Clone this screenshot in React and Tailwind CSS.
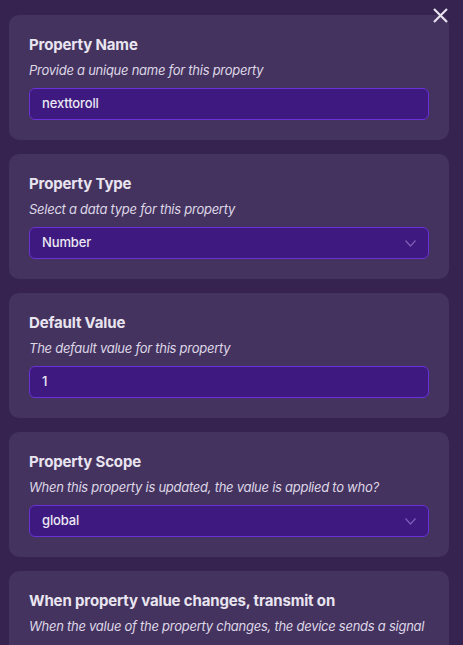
import React from "react";

function Chevron() {
  return (
    <svg width="11" height="7" viewBox="0 0 11 7" fill="none" className="shrink-0">
      <path d="M0.5 0.5 L5.5 6 L10.5 0.5" stroke="#7d5fb8" strokeWidth="1.2" />
    </svg>
  );
}

function Field({ value, select }) {
  return (
    <div className="mt-[9px] flex h-[32px] items-center justify-between rounded-[6px] border border-[#6a31d6] bg-[#3e1a80] pl-3 pr-[12px]">
      <span className="text-[13px] font-medium tracking-[-0.01em] text-[#ece8f4]">{value}</span>
      {select && <Chevron />}
    </div>
  );
}

function Card({ title, subtitle, value, select }) {
  return (
    <div className="shrink-0 rounded-[10px] bg-[#45335f] px-5 pt-[18px] pb-5">
      <div className="text-[15px] font-bold leading-6 tracking-[-0.01em] text-[#e9e5f0]">{title}</div>
      <div className="mt-1 whitespace-nowrap text-[13px] italic leading-[18px] tracking-[-0.02em] text-[#ddd7e6]">{subtitle}</div>
      {value !== undefined && <Field value={value} select={select} />}
    </div>
  );
}

export default function App() {
  return (
    <div
      className="relative h-[645px] w-[463px] overflow-hidden bg-[#36234f]"
      style={{ fontFamily: "Inter, 'Noto Sans', sans-serif" }}
    >
      <button className="absolute right-[15px] top-[8px] text-[#e6e1ee]">
        <svg width="15" height="15" viewBox="0 0 15 15" fill="none">
          <path d="M1 1 L14 14 M14 1 L1 14" stroke="currentColor" strokeWidth="2.2" />
        </svg>
      </button>
      <div className="flex flex-col gap-[14px] px-[9px] pt-[15px] pr-[14px]">
        <Card title="Property Name" subtitle="Provide a unique name for this property" value="nexttoroll" />
        <Card title="Property Type" subtitle="Select a data type for this property" value="Number" select />
        <Card title="Default Value" subtitle="The default value for this property" value="1" />
        <Card title="Property Scope" subtitle="When this property is updated, the value is applied to who?" value="global" select />
        <div className="h-[90px] shrink-0 rounded-[10px] bg-[#45335f] px-5 pt-[18px]">
          <div className="text-[15px] font-bold leading-6 tracking-[-0.01em] text-[#e9e5f0]">
            When property value changes, transmit on
          </div>
          <div className="mt-1 whitespace-nowrap text-[13px] italic leading-[18px] tracking-[-0.02em] text-[#ddd7e6]">
            When the value of the property changes, the device sends a signal
          </div>
        </div>
      </div>
    </div>
  );
}
